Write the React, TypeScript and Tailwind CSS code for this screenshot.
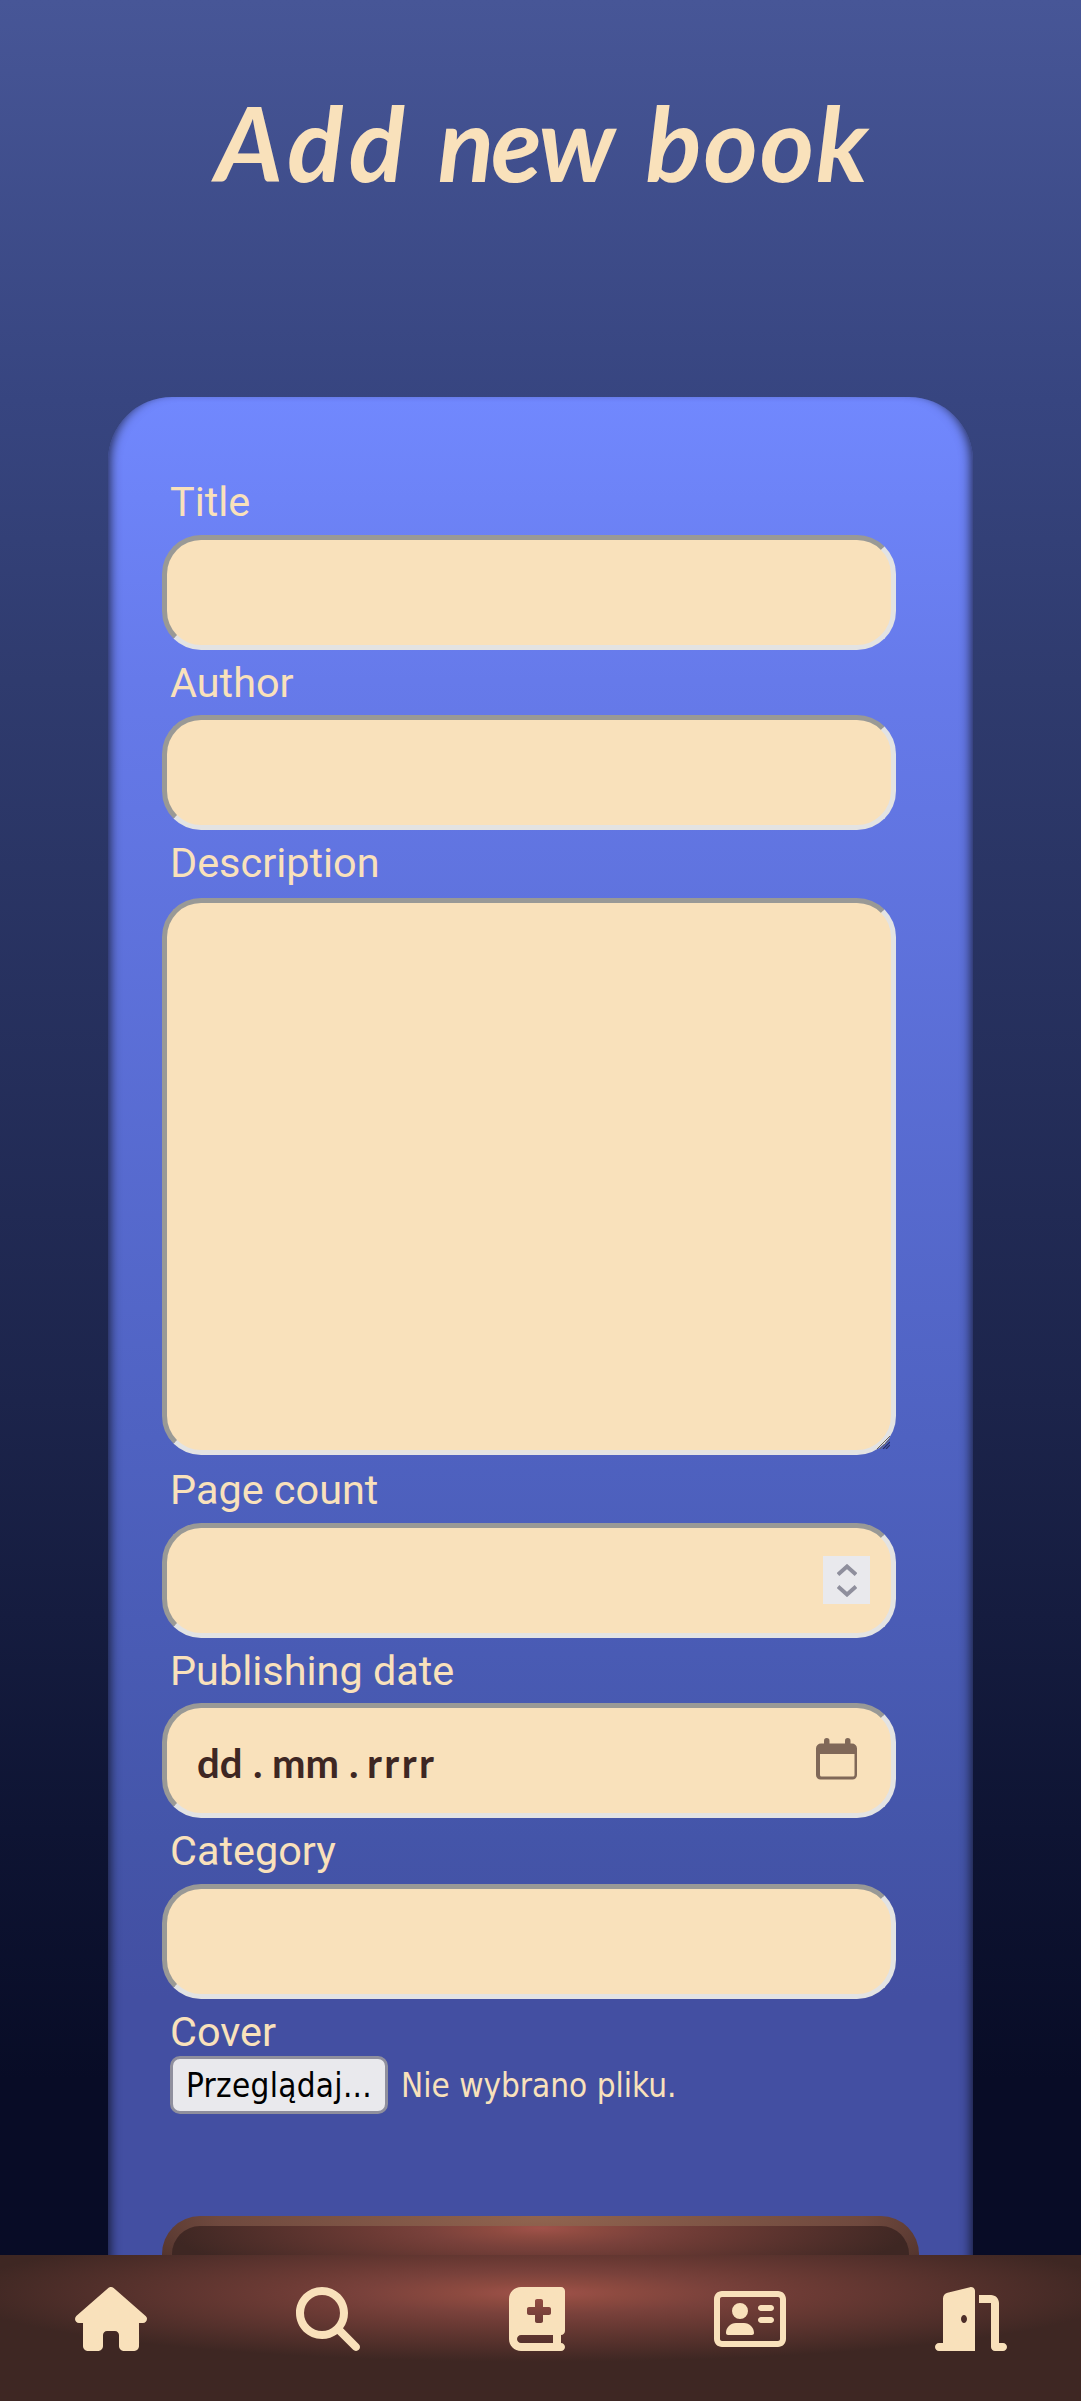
import type { ReactNode } from "react";
import {
  FaBookMedical,
  FaDoorOpen,
  FaHouse,
  FaMagnifyingGlass,
  FaRegAddressCard,
} from "react-icons/fa6";

const fieldBox =
  "block w-[734px] rounded-[39px] border-[5px] border-t-[#999996] border-l-[#999996] border-r-[#e3e3e3] border-b-[#e3e3e3] bg-[#f9e1bb] text-[#3e2723] outline-none";

function Field({ label, children }: { label: string; children: ReactNode }) {
  return (
    <label className="block">
      <span className="block h-[65.5px] pt-px pl-2 font-[Roboto,sans-serif] text-[41.4px] leading-[65.5px] text-[#f9e1bb]">
        {label}
      </span>
      {children}
    </label>
  );
}

function Spinner() {
  return (
    <span className="flex h-12 w-[47px] items-center justify-center bg-[#e9e9ed]">
      <svg width="20" height="33" viewBox="0 0 20 33" fill="none" stroke="#8f8f9d" strokeWidth="4">
        <path d="M1 10.5 L10 2.5 L19 10.5" />
        <path d="M1 22.5 L10 30.5 L19 22.5" />
      </svg>
    </span>
  );
}

function CalendarIcon() {
  return (
    <svg width="41" height="42" viewBox="0 0 41 42" fill="#806858">
      <rect x="8" y="0" width="5.5" height="9" rx="2.7" />
      <rect x="29" y="0" width="5.5" height="9" rx="2.7" />
      <path
        fillRule="evenodd"
        d="M5 5.500H36A5 5 0 0 1 41 10.500V37A4.500 4.500 0 0 1 36.500 41.500H4.500A4.500 4.500 0 0 1 0 37V10.500A5 5 0 0 1 5 5.500ZM4 16V37Q4 38.500 5.500 38.500H37Q38.500 38.500 38.500 37V16Z"
      />
    </svg>
  );
}

function Grip() {
  return (
    <svg className="absolute right-[6px] bottom-[6px]" width="13" height="13" viewBox="0 0 13 13" fill="none">
      <path d="M0 13L13 0M3 13L13 3" stroke="#6b6459" strokeWidth="1" />
      <path d="M6 13L13 6M9 13L13 9" stroke="#263068" strokeWidth="1.2" />
    </svg>
  );
}

export default function App() {
  return (
    <div className="flex h-[2401px] w-[1081px] flex-col overflow-hidden bg-[linear-gradient(180deg,#475697_0px,#374580_400px,#2f3b6e_680px,#1c244b_1400px,#0e1433_1830px,#080c26_2080px,#080c26_2401px)]">
      <main className="flex h-[2255px] flex-col items-center overflow-hidden">
        <h1 className="h-[397px] shrink-0 pt-[77px] pl-1 font-[Lato,sans-serif] text-[104px] leading-[130px] font-bold whitespace-nowrap text-[#f9e1bb] italic">
          <span className="mr-[4.5px] tracking-[5.5px]">Add</span>{" "}
          <span className="mr-[10.5px] tracking-[-3px]">new</span>{" "}
          <span className="tracking-[1.8px]">book</span>
        </h1>
        <form className="h-[2100px] w-[865px] shrink-0 rounded-[64px] bg-[linear-gradient(180deg,#7188fe_0px,#667aea_283px,#4f62c1_1040px,#4455a9_1440px,#434fa2_1600px,#434fa2_2100px)] pt-[72px] pl-[54px] shadow-[inset_10px_0_11px_-8px_rgba(0,0,0,0.7),inset_-10px_0_11px_-8px_rgba(0,0,0,0.7)]">
          <Field label="Title">
            <input className={`${fieldBox} h-[115px] px-7`} />
          </Field>
          <Field label="Author">
            <input className={`${fieldBox} h-[115px] px-7`} />
          </Field>
          <Field label="Description">
            <span className="relative mt-[2.5px] block w-[734px]">
              <textarea className={`${fieldBox} h-[556.5px] resize-none p-7`} />
              <Grip />
            </span>
          </Field>
          <div className="mt-[2.5px]">
            <Field label="Page count">
              <span className={`${fieldBox} flex h-[115px] items-center justify-end pr-[21px]`}>
                <Spinner />
              </span>
            </Field>
          </div>
          <Field label="Publishing date">
            <span
              className={`${fieldBox} flex h-[115px] items-center justify-between pr-[34px] pl-[30px]`}
            >
              <span className="flex pt-1 font-[Lato,sans-serif] text-[40px] leading-[48px] font-bold">
                <span className="w-[56px]">dd</span>
                <span className="w-[19px]">.</span>
                <span className="w-[77px]">mm</span>
                <span className="w-[18px]">.</span>
                <span className="tracking-[2.4px]">rrrr</span>
              </span>
              <span className="-mt-1">
                <CalendarIcon />
              </span>
            </span>
          </Field>
          <Field label="Category">
            <input className={`${fieldBox} h-[115px] px-7`} />
          </Field>
          <div className="pl-2">
            <div className="h-[65.5px] pt-px font-[Roboto,sans-serif] text-[41.4px] leading-[65.5px] text-[#f9e1bb]">
              Cover
            </div>
            <div className="-mt-[8px] flex items-center gap-[13px] font-['DejaVu_Sans_Condensed','Noto_Sans',sans-serif] text-[33px] leading-[50px] whitespace-nowrap">
              <button
                type="button"
                className="h-[58px] w-[218px] rounded-[10px] border-[3px] border-[#8f8f9d] bg-[#e9e9ed] pt-[2px] tracking-[0.3px] text-black"
              >
                Przeglądaj...
              </button>
              <span className="pt-[2px] text-[#f9e1bb]">Nie wybrano pliku.</span>
            </div>
          </div>
          <div className="mt-[102px] h-[160px] w-[757px] rounded-[38px] bg-[radial-gradient(ellipse_430px_100px_at_50%_0px,#91644f_0%,#6f493e_75%,#4f312b_100%)] p-[10px]">
            <div className="h-full rounded-[28px] bg-[radial-gradient(ellipse_370px_64px_at_50%_2px,#a1524a_0%,#8d4a40_14%,#79413b_31%,#6d3b35_45%,#3e2723_100%)]" />
          </div>
        </form>
      </main>
      <nav className="flex h-[146px] shrink-0 items-start justify-between bg-[#3e2723] bg-[radial-gradient(ellipse_580px_69px_at_50%_38px,#a1524a_0%,#8d4a40_14%,#79413b_31%,#6d3b35_45%,#3e2723_100%)] pt-8 pr-[74px] pl-[75px] text-[#f9e1bb]">
        <a>
          <FaHouse className="h-16 w-[72px]" />
        </a>
        <a>
          <FaMagnifyingGlass className="h-16 w-16" />
        </a>
        <a>
          <FaBookMedical className="h-16 w-14" />
        </a>
        <a>
          <FaRegAddressCard className="h-16 w-[72px]" />
        </a>
        <a>
          <FaDoorOpen className="h-16 w-[72px]" />
        </a>
      </nav>
    </div>
  );
}
